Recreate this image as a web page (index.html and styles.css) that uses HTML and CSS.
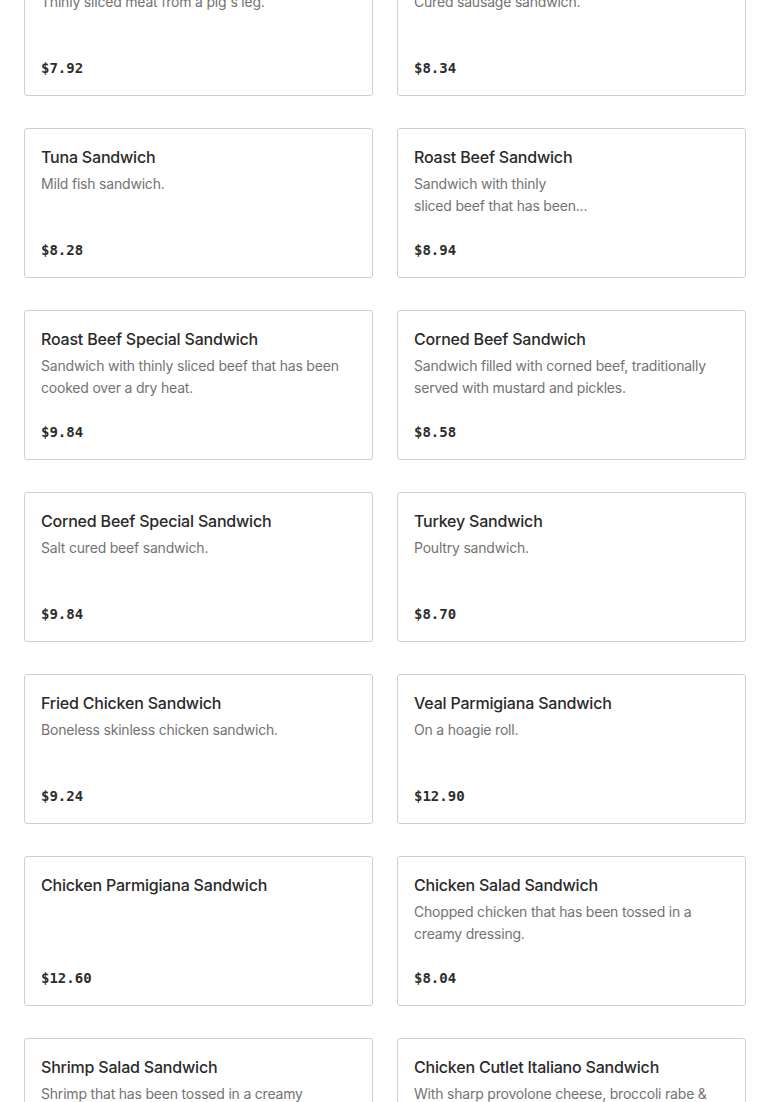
FILE: index.html
```html
<!DOCTYPE html>
<html lang="en">
<head>
<meta charset="utf-8">
<title>Sandwiches</title>
<link rel="stylesheet" href="styles.css">
</head>
<body>
<main class="menu">
  <div class="grid">
    <article class="card">
      <h3 class="title">Ham Sandwich</h3>
      <p class="desc">Thinly sliced meat from a pig's leg.</p>
      <div class="price">$7.92</div>
    </article>
    <article class="card">
      <h3 class="title">Salami Sandwich</h3>
      <p class="desc">Cured sausage sandwich.</p>
      <div class="price">$8.34</div>
    </article>
    <article class="card">
      <h3 class="title">Tuna Sandwich</h3>
      <p class="desc">Mild fish sandwich.</p>
      <div class="price">$8.28</div>
    </article>
    <article class="card">
      <h3 class="title">Roast Beef Sandwich</h3>
      <p class="desc">Sandwich with thinly<br>sliced beef that has been...</p>
      <div class="price">$8.94</div>
    </article>
    <article class="card">
      <h3 class="title">Roast Beef Special Sandwich</h3>
      <p class="desc">Sandwich with thinly sliced beef that has been cooked over a dry heat.</p>
      <div class="price">$9.84</div>
    </article>
    <article class="card">
      <h3 class="title">Corned Beef Sandwich</h3>
      <p class="desc">Sandwich filled with corned beef, traditionally served with mustard and pickles.</p>
      <div class="price">$8.58</div>
    </article>
    <article class="card">
      <h3 class="title">Corned Beef Special Sandwich</h3>
      <p class="desc">Salt cured beef sandwich.</p>
      <div class="price">$9.84</div>
    </article>
    <article class="card">
      <h3 class="title">Turkey Sandwich</h3>
      <p class="desc">Poultry sandwich.</p>
      <div class="price">$8.70</div>
    </article>
    <article class="card">
      <h3 class="title">Fried Chicken Sandwich</h3>
      <p class="desc">Boneless skinless chicken sandwich.</p>
      <div class="price">$9.24</div>
    </article>
    <article class="card">
      <h3 class="title">Veal Parmigiana Sandwich</h3>
      <p class="desc">On a hoagie roll.</p>
      <div class="price">$12.90</div>
    </article>
    <article class="card">
      <h3 class="title">Chicken Parmigiana Sandwich</h3>
      <div class="price">$12.60</div>
    </article>
    <article class="card">
      <h3 class="title">Chicken Salad Sandwich</h3>
      <p class="desc">Chopped chicken that has been tossed in a creamy dressing.</p>
      <div class="price">$8.04</div>
    </article>
    <article class="card">
      <h3 class="title">Shrimp Salad Sandwich</h3>
      <p class="desc">Shrimp that has been tossed in a creamy dressing.</p>
      <div class="price">$12.90</div>
    </article>
    <article class="card">
      <h3 class="title">Chicken Cutlet Italiano Sandwich</h3>
      <p class="desc">With sharp provolone cheese, broccoli rabe &amp; roasted peppers.</p>
      <div class="price">$11.50</div>
    </article>
  </div>
</main>
</body>
</html>
```

FILE: styles.css
```css
html, body {
  margin: 0;
  padding: 0;
  background: #ffffff;
}

body {
  font-family: "Inter", "Noto Sans", "Liberation Sans", sans-serif;
  color: #2d2d2d;
  overflow: hidden;
}

.menu {
  padding: 0 24px;
}

.grid {
  margin-top: -54px;
  display: grid;
  grid-template-columns: 1fr 1fr;
  column-gap: 24px;
  row-gap: 32px;
}

.card {
  box-sizing: border-box;
  height: 150px;
  border: 1px solid #cfcfcf;
  border-radius: 3px;
  padding: 16px 16px 17px 16px;
  display: flex;
  flex-direction: column;
  background: #fff;
}

.title {
  margin: 0;
  font-size: 16px;
  line-height: 24px;
  font-weight: 500;
  color: #2a2a2a;
  letter-spacing: -0.2px;
}

.desc {
  margin: 4px 0 0 0;
  font-size: 14px;
  line-height: 22px;
  font-weight: 400;
  color: #737373;
  letter-spacing: -0.2px;
  display: -webkit-box;
  -webkit-line-clamp: 2;
  -webkit-box-orient: vertical;
  overflow: hidden;
}

.price {
  margin-top: auto;
  font-family: "DejaVu Sans Mono", "Liberation Mono", monospace;
  font-size: 14px;
  line-height: 20px;
  font-weight: 700;
  color: #2d2d2d;
}
```
